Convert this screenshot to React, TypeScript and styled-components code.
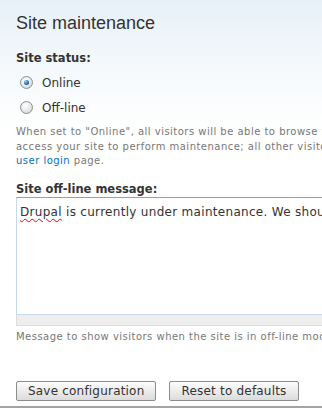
import * as React from 'react';
import styled, { createGlobalStyle } from 'styled-components';

const GlobalStyle = createGlobalStyle`
  html, body {
    margin: 0;
    padding: 0;
    background: #fff;
  }
  body {
    overflow: hidden;
  }
`;

const Page = styled.div`
  width: 322px;
  height: 408px;
  overflow: hidden;
  box-sizing: border-box;
  background: linear-gradient(to bottom, #e7f0f8 0, #f5f9fc 70px, #ffffff 130px);
  font-family: 'DejaVu Sans', Verdana, sans-serif;
  color: #333;
  display: flex;
  flex-direction: column;
`;

const Content = styled.div`
  flex: 1;
  padding: 12px 0 0 16px;
  display: flex;
  flex-direction: column;
`;

const Title = styled.h1`
  margin: 0;
  font-family: 'Liberation Sans', Arial, sans-serif;
  font-weight: normal;
  font-size: 18px;
  line-height: 22px;
  color: #333;
`;

const Label = styled.div<{ $top: number }>`
  margin-top: ${(p) => p.$top}px;
  font-size: 11.5px;
  line-height: 15px;
  font-weight: bold;
  color: #333;
  white-space: nowrap;
`;

const Options = styled.div`
  display: flex;
  flex-direction: column;
  gap: 6px;
  margin-top: 7px;
  padding-left: 4px;
`;

const Option = styled.label`
  display: flex;
  align-items: center;
  gap: 9px;
  height: 19px;
  font-size: 12px;
  color: #333;
`;

const Radio = styled.span<{ $checked?: boolean }>`
  width: 11px;
  height: 11px;
  border-radius: 50%;
  border: 1px solid #8e8f8f;
  background: radial-gradient(circle at 40% 35%, #ffffff 0, #e6e6e6 55%, #c9c9c9 100%);
  display: flex;
  align-items: center;
  justify-content: center;
  &::after {
    content: '';
    display: ${(p) => (p.$checked ? 'block' : 'none')};
    width: 5px;
    height: 5px;
    border-radius: 50%;
    background: radial-gradient(circle at 35% 30%, #8fd2ff 0, #1f6fb8 55%, #0d3f7a 100%);
  }
`;

const Description = styled.div<{ $top: number }>`
  margin-top: ${(p) => p.$top}px;
  font-size: 10px;
  letter-spacing: 0.48px;
  line-height: 14.5px;
  color: #777;
  white-space: nowrap;
`;

const Link = styled.a`
  color: #0074bd;
  text-decoration: none;
`;

const TextBox = styled.div`
  margin-top: 0;
  width: 600px;
  height: 118px;
  box-sizing: border-box;
  border: 1px solid #c6d8ea;
  border-top-color: #7aa6d2;
  background: #fff;
  padding: 7px 3px 5px;
  font-size: 12px;
  letter-spacing: 0.3px;
  line-height: 15px;
  color: #333;
  white-space: nowrap;
`;

const Misspelled = styled.span`
  text-decoration: underline wavy #e00;
  text-decoration-thickness: 1px;
  text-underline-offset: 2px;
`;

const Grippie = styled.div`
  width: 600px;
  height: 11px;
  box-sizing: border-box;
  background: #eee;
  border: 1px solid #ddd;
  border-top: none;
`;

const Buttons = styled.div`
  margin-top: 37px;
  display: flex;
  gap: 13px;
`;

const Button = styled.button`
  height: 20px;
  box-sizing: border-box;
  padding: 0 11px;
  border: 1px solid #8c8c8c;
  border-radius: 2px;
  background: linear-gradient(to bottom, #fdfdfd 0, #ececec 50%, #dcdcdc 100%);
  font-family: 'DejaVu Sans', Verdana, sans-serif;
  font-size: 12px;
  letter-spacing: 0.2px;
  color: #333;
  line-height: 18px;
`;

const BottomRule = styled.div`
  height: 2px;
  background: #a3a3a3;
`;

export default function App() {
  return (
    <>
      <GlobalStyle />
      <Page>
        <Content>
          <Title>Site maintenance</Title>
          <Label $top={17}>Site status:</Label>
          <Options>
            <Option>
              <Radio $checked />
              Online
            </Option>
            <Option>
              <Radio />
              Off-line
            </Option>
          </Options>
          <Description $top={8}>
            When set to "Online", all visitors will be able to browse your site normally. When set to "Off-line", only users with the "administer site configuration" permission will be able to
            <br />
            access your site to perform maintenance; all other visitors will see the site off-line message configured below. Authorized users can log in during "Off-line" mode directly via the
            <br />
            <Link href="#">user login</Link> page.
          </Description>
          <Label $top={13}>Site off-line message:</Label>
          <TextBox role="textbox">
            <Misspelled>Drupal</Misspelled> is currently under maintenance. We should be back shortly. Thank you for your patience.
          </TextBox>
          <Grippie />
          <Description $top={4}>
            Message to show visitors when the site is in off-line mode.
          </Description>
          <Buttons>
            <Button>Save configuration</Button>
            <Button>Reset to defaults</Button>
          </Buttons>
        </Content>
        <BottomRule />
      </Page>
    </>
  );
}
